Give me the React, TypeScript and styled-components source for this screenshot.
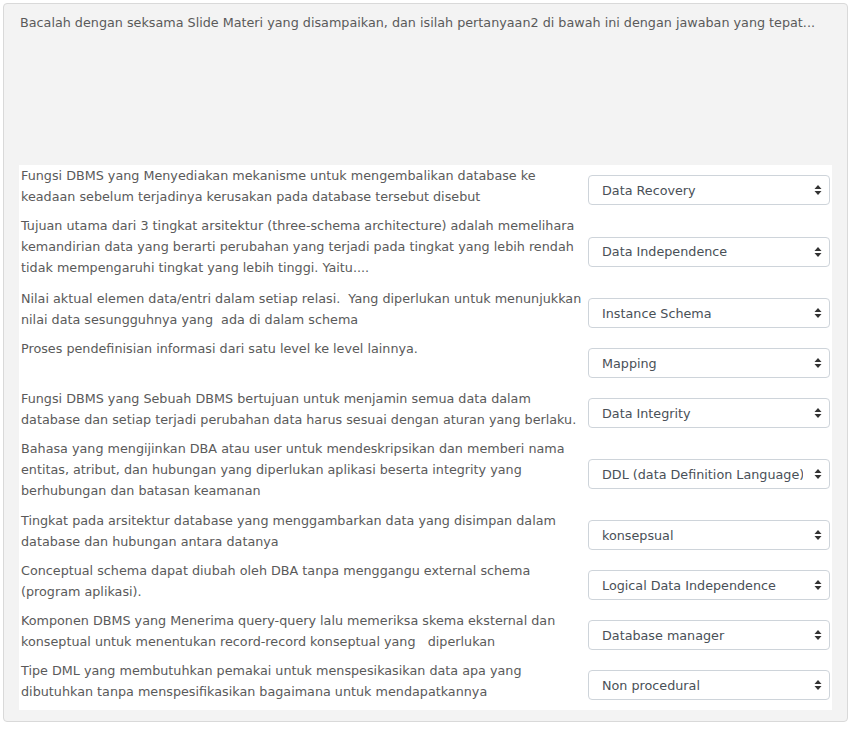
import React from "react";
import styled, { createGlobalStyle } from "styled-components";

const Global = createGlobalStyle`
  html, body { margin: 0; padding: 0; background: #fff; }
  body { padding: 3px 5px 0 3px; font-family: "DejaVu Sans", Verdana, sans-serif; }
`;

const Box = styled.div`
  width: 845px;
  box-sizing: border-box;
  background: #f3f3f3;
  border: 1px solid #d9d9d9;
  border-radius: 4px;
  padding: 8px 15px 11px 15px;
`;

const Intro = styled.p`
  margin: 0 0 132px 1px;
  font-size: 12.75px;
  line-height: 21px;
  color: #5a5a5a;
`;

const Table = styled.div`
  background: #fff;
  display: grid;
  grid-template-columns: 567px 1fr;
`;

const QText = styled.div<{ $extra?: number }>`
  padding: 0 0 ${(p) => 8 + (p.$extra ?? 0)}px 2px;
  font-size: 12.75px;
  line-height: 21px;
  color: #5a5a5a;
`;

const Cell = styled.div`
  display: flex;
  align-items: center;
  padding: 10px 2px 10px 2px;
`;

const SelectWrap = styled.div`
  position: relative;
  width: 100%;
`;

const Select = styled.select`
  appearance: none;
  -webkit-appearance: none;
  display: block;
  width: 100%;
  height: 30px;
  box-sizing: border-box;
  border: 1px solid #ced4da;
  border-radius: 4px;
  background: #fff;
  padding: 0 26px 0 13px;
  font-family: "DejaVu Sans", Verdana, sans-serif;
  font-size: 12.75px;
  color: #495057;
  outline: none;
`;

const Arrows = styled.svg`
  position: absolute;
  right: 8px;
  top: 50%;
  transform: translateY(-50%);
  pointer-events: none;
`;

const rows: { q: string; a: string; extra?: number }[] = [
  { q: "Fungsi DBMS yang Menyediakan mekanisme untuk mengembalikan database ke keadaan sebelum terjadinya kerusakan pada database tersebut disebut", a: "Data Recovery" },
  { q: "Tujuan utama dari 3 tingkat arsitektur (three-schema architecture) adalah memelihara kemandirian data yang berarti perubahan yang terjadi pada tingkat yang lebih rendah tidak mempengaruhi tingkat yang lebih tinggi. Yaitu....", a: "Data Independence", extra: 2 },
  { q: "Nilai aktual elemen data/entri dalam setiap relasi.\u00a0 Yang diperlukan untuk menunjukkan nilai data sesungguhnya yang\u00a0 ada di dalam schema", a: "Instance Schema" },
  { q: "Proses pendefinisian informasi dari satu level ke level lainnya.", a: "Mapping" },
  { q: "Fungsi DBMS yang Sebuah DBMS bertujuan untuk menjamin semua data dalam database dan setiap terjadi perubahan data harus sesuai dengan aturan yang berlaku.", a: "Data Integrity" },
  { q: "Bahasa yang mengijinkan DBA atau user untuk mendeskripsikan dan memberi nama entitas, atribut, dan hubungan yang diperlukan aplikasi beserta integrity yang berhubungan dan batasan keamanan", a: "DDL (data Definition Language)", extra: 1 },
  { q: "Tingkat pada arsitektur database yang menggambarkan data yang disimpan dalam database dan hubungan antara datanya", a: "konsepsual" },
  { q: "Conceptual schema dapat diubah oleh DBA tanpa menggangu external schema (program aplikasi).", a: "Logical Data Independence" },
  { q: "Komponen DBMS yang Menerima query-query lalu memeriksa skema eksternal dan konseptual untuk menentukan record-record konseptual yang\u00a0\u00a0 diperlukan", a: "Database manager" },
  { q: "Tipe DML yang membutuhkan pemakai untuk menspesikasikan data apa yang dibutuhkan tanpa menspesifikasikan bagaimana untuk mendapatkannya", a: "Non procedural" },
];

export default function App() {
  return (
    <>
      <Global />
      <Box>
        <Intro>
          Bacalah dengan seksama Slide Materi yang disampaikan, dan isilah pertanyaan2 di bawah ini dengan jawaban yang tepat...
        </Intro>
        <Table>
          {rows.map((r, i) => (
            <React.Fragment key={i}>
              <QText $extra={r.extra}>{r.q}</QText>
              <Cell>
                <SelectWrap>
                  <Select defaultValue={r.a}>
                    <option value={r.a}>{r.a}</option>
                  </Select>
                  <Arrows width="8" height="11" viewBox="0 0 8 11">
                    <path d="M4 0.5 L7.5 4.5 L0.5 4.5 Z" fill="#333" />
                    <path d="M4 10.5 L7.5 6.5 L0.5 6.5 Z" fill="#333" />
                  </Arrows>
                </SelectWrap>
              </Cell>
            </React.Fragment>
          ))}
        </Table>
      </Box>
    </>
  );
}
